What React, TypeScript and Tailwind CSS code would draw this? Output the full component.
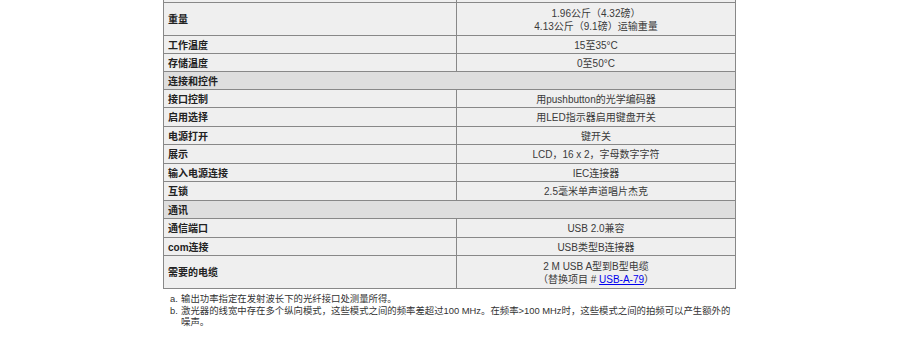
import React from 'react'

type Row =
  | { kind: 'section'; label: string; h: string }
  | { kind: 'item'; label: string; value: React.ReactNode; h: string }

const rows: Row[] = [
  {
    kind: 'item',
    label: '重量',
    value: (
      <>
        <p>1.96公斤（4.32磅）</p>
        <p>4.13公斤（9.1磅）运输重量</p>
      </>
    ),
    h: 'h-[33px]',
  },
  { kind: 'item', label: '工作温度', value: '15至35°C', h: 'h-[18px]' },
  { kind: 'item', label: '存储温度', value: '0至50°C', h: 'h-[18px]' },
  { kind: 'section', label: '连接和控件', h: 'h-[18px]' },
  { kind: 'item', label: '接口控制', value: '用pushbutton的光学编码器', h: 'h-[18px]' },
  { kind: 'item', label: '启用选择', value: '用LED指示器启用键盘开关', h: 'h-[19px]' },
  { kind: 'item', label: '电源打开', value: '键开关', h: 'h-[18px]' },
  { kind: 'item', label: '展示', value: 'LCD，16 x 2，字母数字字符', h: 'h-[19px]' },
  { kind: 'item', label: '输入电源连接', value: 'IEC连接器', h: 'h-[18px]' },
  { kind: 'item', label: '互锁', value: '2.5毫米单声道唱片杰克', h: 'h-[19px]' },
  { kind: 'section', label: '通讯', h: 'h-[18px]' },
  { kind: 'item', label: '通信端口', value: 'USB 2.0兼容', h: 'h-[19px]' },
  { kind: 'item', label: 'com连接', value: 'USB类型B连接器', h: 'h-[18px]' },
  {
    kind: 'item',
    label: '需要的电缆',
    value: (
      <>
        <p>2 M USB A型到B型电缆</p>
        <p>
          （替换项目 #{' '}
          <a href="#" className="text-[#0000ee] underline">
            USB-A-79
          </a>
          ）
        </p>
      </>
    ),
    h: 'h-[33px]',
  },
]

export default function App() {
  return (
    <div className="min-h-[339px] bg-white font-['Liberation_Sans','Noto_Sans_CJK_SC',sans-serif] text-[10px] text-[#333]">
      <div className="ml-[163px] w-[573px] border-x border-[#888]">
        <div className="grid h-[3px] grid-cols-[292px_279px] border-b border-[#888] bg-[#efefef]">
          <div />
          <div className="border-l border-[#888]" />
        </div>

        {rows.map((row) =>
          row.kind === 'section' ? (
            <div
              key={row.label}
              className={`flex items-center border-b border-[#888] bg-[#dedede] px-[4px] pt-px font-bold text-[#222] ${row.h}`}
            >
              {row.label}
            </div>
          ) : (
            <div
              key={row.label}
              className={`grid grid-cols-[292px_279px] border-b border-[#888] bg-[#efefef] ${row.h}`}
            >
              <div className="flex items-center px-[4px] pt-px font-bold text-[#222]">{row.label}</div>
              <div className="flex flex-col items-center justify-center border-l border-[#888] pt-px leading-[13px] text-[#3a3a3a]">
                {row.value}
              </div>
            </div>
          ),
        )}
      </div>

      <div className="ml-[170px] mt-[4px] w-[570px] text-[9.4px] leading-[11.5px] text-[#333]">
        <div className="flex">
          <span className="w-[11px] shrink-0">a.</span>
          <span>输出功率指定在发射波长下的光纤接口处测量所得。</span>
        </div>
        <div className="flex">
          <span className="w-[11px] shrink-0">b.</span>
          <span>
            激光器的线宽中存在多个纵向模式，这些模式之间的频率差超过100 MHz。在频率&gt;100 MHz时，这些模式之间的拍频可以产生额外的
            <br />
            噪声。
          </span>
        </div>
      </div>
    </div>
  )
}
